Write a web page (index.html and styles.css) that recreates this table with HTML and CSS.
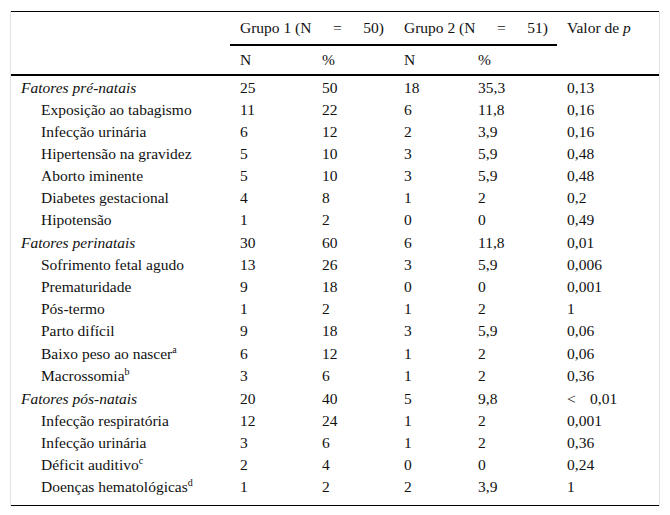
FILE: index.html
```html
<!DOCTYPE html>
<html>
<head>
<meta charset="utf-8">
<link rel="stylesheet" href="styles.css">
</head>
<body>
<div class="frame">
<table class="data">
<colgroup>
<col class="c-label"><col class="c-n"><col class="c-n"><col class="c-n2"><col class="c-p2"><col class="c-p">
</colgroup>
<thead>
<tr class="h1">
<th></th>
<th colspan="2" class="grp"><span class="gt"><span>Grupo 1 (N</span><span>=</span><span>50)</span></span></th>
<th colspan="2" class="grp"><span class="gt"><span>Grupo 2 (N</span><span>=</span><span>51)</span></span></th>
<th>Valor de <i>p</i></th>
</tr>
<tr class="h2">
<th></th><th>N</th><th>%</th><th>N</th><th>%</th><th></th>
</tr>
</thead>
<tbody>
<tr class="first"><td class="cat">Fatores pré-natais</td><td>25</td><td>50</td><td>18</td><td>35,3</td><td>0,13</td></tr>
<tr><td class="sub">Exposição ao tabagismo</td><td>11</td><td>22</td><td>6</td><td>11,8</td><td>0,16</td></tr>
<tr><td class="sub">Infecção urinária</td><td>6</td><td>12</td><td>2</td><td>3,9</td><td>0,16</td></tr>
<tr><td class="sub">Hipertensão na gravidez</td><td>5</td><td>10</td><td>3</td><td>5,9</td><td>0,48</td></tr>
<tr><td class="sub">Aborto iminente</td><td>5</td><td>10</td><td>3</td><td>5,9</td><td>0,48</td></tr>
<tr><td class="sub">Diabetes gestacional</td><td>4</td><td>8</td><td>1</td><td>2</td><td>0,2</td></tr>
<tr><td class="sub">Hipotensão</td><td>1</td><td>2</td><td>0</td><td>0</td><td>0,49</td></tr>
<tr class="tall"><td class="cat">Fatores perinatais</td><td>30</td><td>60</td><td>6</td><td>11,8</td><td>0,01</td></tr>
<tr><td class="sub">Sofrimento fetal agudo</td><td>13</td><td>26</td><td>3</td><td>5,9</td><td>0,006</td></tr>
<tr><td class="sub">Prematuridade</td><td>9</td><td>18</td><td>0</td><td>0</td><td>0,001</td></tr>
<tr><td class="sub">Pós-termo</td><td>1</td><td>2</td><td>1</td><td>2</td><td>1</td></tr>
<tr><td class="sub">Parto difícil</td><td>9</td><td>18</td><td>3</td><td>5,9</td><td>0,06</td></tr>
<tr class="tall"><td class="sub">Baixo peso ao nascer<sup>a</sup></td><td>6</td><td>12</td><td>1</td><td>2</td><td>0,06</td></tr>
<tr><td class="sub">Macrossomia<sup>b</sup></td><td>3</td><td>6</td><td>1</td><td>2</td><td>0,36</td></tr>
<tr class="tall"><td class="cat">Fatores pós-natais</td><td>20</td><td>40</td><td>5</td><td>9,8</td><td><span class="lt">&lt;</span>0,01</td></tr>
<tr><td class="sub">Infecção respiratória</td><td>12</td><td>24</td><td>1</td><td>2</td><td>0,001</td></tr>
<tr><td class="sub">Infecção urinária</td><td>3</td><td>6</td><td>1</td><td>2</td><td>0,36</td></tr>
<tr><td class="sub">Déficit auditivo<sup>c</sup></td><td>2</td><td>4</td><td>0</td><td>0</td><td>0,24</td></tr>
<tr class="last"><td class="sub">Doenças hematológicas<sup>d</sup></td><td>1</td><td>2</td><td>2</td><td>3,9</td><td>1</td></tr>
</tbody>
</table>
</div>
</body>
</html>
```
FILE: styles.css
```css
html, body {
  margin: 0;
  padding: 0;
  background: #fff;
}
body, table, th, td {
  font-family: "Liberation Serif", "Times New Roman", serif;
  font-size: 15.5px;
  color: #111;
}
.frame {
  margin: 11px 0 0 10px;
  width: 648px;
  border-left: 1px solid #e2e2e2;
  border-right: 1px solid #e2e2e2;
}
.data {
  width: 648px;
  border-collapse: collapse;
  table-layout: fixed;
  border-top: 1px solid #000;
  border-bottom: 1.5px solid #000;
}
.c-label { width: 219px; }
.c-n { width: 82px; }
.c-n2 { width: 74px; }
.c-p2 { width: 89px; }
.c-p { width: 102px; }
th, td {
  padding: 0 0 0 10px;
  text-align: left;
  font-weight: normal;
  white-space: nowrap;
}
.h1 th {
  height: 31px;
  vertical-align: middle;
  padding-bottom: 1px;
}
.h1 .grp {
  border-bottom: 2px solid #000;
}
.gt {
  display: flex;
  justify-content: space-between;
  width: 144px;
}
.h2 th {
  height: 28px;
  vertical-align: middle;
  border-bottom: 2px solid #000;
}
tbody td {
  height: 22px;
  line-height: 22px;
  padding-top: 0;
  padding-bottom: 0;
}
tbody tr.tall td {
  height: 23px;
}
tbody tr.first td {
  padding-top: 1px;
}
tbody tr.last td {
  padding-bottom: 7px;
}
.cat {
  font-style: italic;
}
td.sub {
  padding-left: 30px;
}
sup {
  font-size: 10px;
  line-height: 0;
  vertical-align: 6px;
}
.lt {
  display: inline-block;
  width: 23px;
}
```
